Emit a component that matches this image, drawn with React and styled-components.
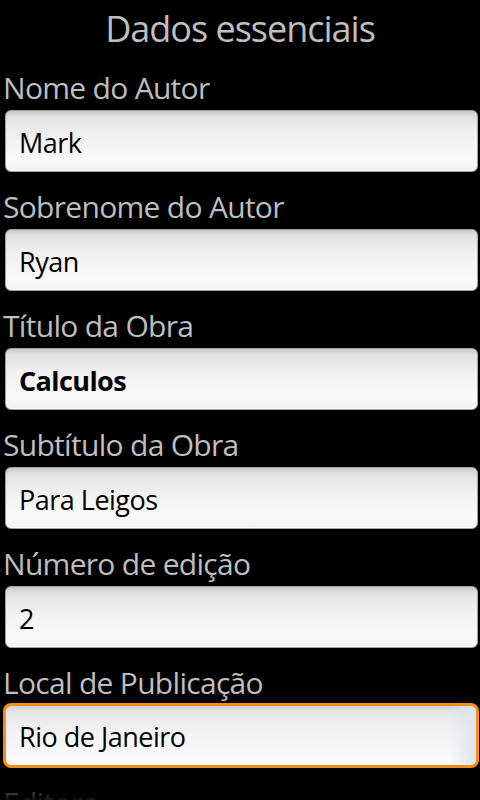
import styled, { createGlobalStyle } from 'styled-components'

const GlobalStyle = createGlobalStyle`
  html, body {
    margin: 0;
    padding: 0;
    background: #000;
    overflow: hidden;
  }
  * {
    box-sizing: border-box;
  }
`

const Screen = styled.div`
  position: relative;
  width: 480px;
  height: 800px;
  overflow: hidden;
  background: #000;
  font-family: "Open Sans", "DejaVu Sans", sans-serif;
`

const Form = styled.div`
  display: flex;
  flex-direction: column;
  padding-top: 4px;
`

const Heading = styled.h1`
  margin: 0;
  font-size: 36px;
  line-height: 50px;
  font-weight: 400;
  letter-spacing: -1px;
  color: #bebebe;
  text-align: center;
`

const Field = styled.div`
  display: flex;
  flex-direction: column;
  padding-top: ${({ $first }) => ($first ? '14px' : '15px')};
`

const Label = styled.label`
  display: block;
  padding-left: 3px;
  font-size: 30px;
  line-height: 40px;
  letter-spacing: -0.7px;
  color: #bebebe;
  white-space: nowrap;
`

const Input = styled.input`
  display: block;
  margin: ${({ $focused }) => ($focused ? '0 1px 0 3px' : '2px 2px 0 5px')};
  width: ${({ $focused }) => ($focused ? '476px' : '473px')};
  height: ${({ $focused }) => ($focused ? '65px' : '62px')};
  padding: 2px 0 0 13px;
  border: ${({ $focused }) => ($focused ? '3px solid #f58a1f' : '1px solid #a0a0a0')};
  border-radius: ${({ $focused }) => ($focused ? '8px' : '6px')};
  background: ${({ $focused }) =>
    $focused
      ? 'linear-gradient(to right, transparent 94%, #dde5ee 100%), linear-gradient(#cfcfcf 0, #e6e6e6 6px, #f3f3f3 45%, #fbfbfb 100%)'
      : 'linear-gradient(#c9c9c9 0, #e2e2e2 6px, #f0f0f0 40%, #fafafa 80%, #f2f2f2 100%)'};
  box-shadow: inset 0 -1px 0 rgba(255, 255, 255, 0.8);
  font-family: "Open Sans", "DejaVu Sans", sans-serif;
  font-size: 27px;
  font-weight: ${({ $bold }) => ($bold ? 700 : 400)};
  letter-spacing: ${({ $bold }) => ($bold ? '-0.6px' : '-0.5px')};
  color: #000;
  outline: none;
  appearance: none;
`

const FadingEdge = styled.div`
  position: absolute;
  left: 0;
  right: 0;
  bottom: 0;
  height: 30px;
  background: linear-gradient(rgba(0, 0, 0, 0), rgba(0, 0, 0, 0.9));
  pointer-events: none;
`

const fields = [
  { label: 'Nome do Autor', value: 'Mark' },
  { label: 'Sobrenome do Autor', value: 'Ryan' },
  { label: 'Título da Obra', value: 'Calculos', bold: true },
  { label: 'Subtítulo da Obra', value: 'Para Leigos' },
  { label: 'Número de edição', value: '2' },
  { label: 'Local de Publicação', value: 'Rio de Janeiro', focused: true },
  { label: 'Editora', value: '' },
]

export default function App() {
  return (
    <>
      <GlobalStyle />
      <Screen>
        <Form>
          <Heading>Dados essenciais</Heading>
          {fields.map((f, i) => (
            <Field key={f.label} $first={i === 0}>
              <Label>{f.label}</Label>
              <Input
                readOnly
                defaultValue={f.value}
                $bold={f.bold}
                $focused={f.focused}
              />
            </Field>
          ))}
        </Form>
        <FadingEdge />
      </Screen>
    </>
  )
}
